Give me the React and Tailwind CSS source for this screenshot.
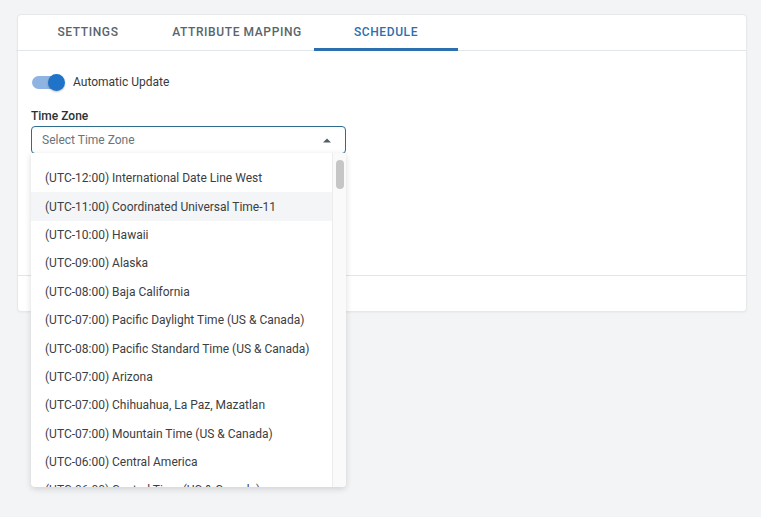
import { useState } from "react";

const zones = [
    "(UTC-12:00) International Date Line West",
    "(UTC-11:00) Coordinated Universal Time-11",
    "(UTC-10:00) Hawaii",
    "(UTC-09:00) Alaska",
    "(UTC-08:00) Baja California",
    "(UTC-07:00) Pacific Daylight Time (US & Canada)",
    "(UTC-08:00) Pacific Standard Time (US & Canada)",
    "(UTC-07:00) Arizona",
    "(UTC-07:00) Chihuahua, La Paz, Mazatlan",
    "(UTC-07:00) Mountain Time (US & Canada)",
    "(UTC-06:00) Central America",
    "(UTC-06:00) Central Time (US & Canada)",
    "(UTC-06:00) Guadalajara, Mexico City, Monterrey",
];

const tabs = ["Settings", "Attribute Mapping", "Schedule"];

export default function App() {
    const [active, setActive] = useState(2);
    const [auto, setAuto] = useState(true);

    return (
        <div className="h-[517px] bg-[#f2f4f5] pt-[14px] px-[17px] font-['Roboto',sans-serif] overflow-hidden">
            {/* Card */}
            <div className="relative w-[730px] bg-white rounded-[4px] border border-[#e6e9ea] shadow-[0_1px_2px_rgba(0,0,0,0.04)]">
                {/* Tabs */}
                <div className="flex gap-[5px] h-[36px] border-b border-[#e3e6e8] -ml-[2px]">
                    {tabs.map((t, i) => (
                        <button
                            key={t}
                            onClick={() => setActive(i)}
                            className={`w-[144px] h-[36px] pt-[1px] text-[12px] font-medium uppercase tracking-[0.6px] border-b-[3px] ${
                                active === i
                                    ? "text-[#2c6fae] border-[#2c6fae]"
                                    : "text-[#59656a] border-transparent"
                            }`}
                        >
                            {t}
                        </button>
                    ))}
                </div>

                {/* Body */}
                <div className="h-[224px] px-[13px] pt-[22px]">
                    <div className="flex items-center">
                        <button
                            onClick={() => setAuto(!auto)}
                            className="relative w-[34px] h-[18px] flex items-center"
                        >
                            <span className="w-[28px] h-[13px] rounded-full bg-[#8fb4e2] ml-[1px]"></span>
                            <span className="absolute right-0 top-[1px] w-[17px] h-[17px] rounded-full bg-[#1f73c9] shadow-[0_1px_2px_rgba(0,0,0,0.25)]"></span>
                        </button>
                        <span className="ml-[8px] text-[12px] text-[#333b3e]">Automatic Update</span>
                    </div>

                    <div className="mt-[16px] text-[12px] font-medium text-[#2b3133]">Time Zone</div>

                    <div className="mt-[1px] w-[315px] h-[28px] border border-[#2e6d8e] rounded-[4px] flex items-center justify-between pl-[10px] pr-[13px]">
                        <span className="text-[12px] text-[#6b7478]">Select Time Zone</span>
                        <svg width="10" height="6" viewBox="0 0 10 6">
                            <path d="M1 5.5 L5 1.5 L9 5.5 Z" fill="#555d60" />
                        </svg>
                    </div>
                </div>

                {/* Footer */}
                <div className="h-[36px] border-t border-[#e3e6e8]"></div>

                {/* Dropdown */}
                <div className="absolute left-[13px] top-[138px] w-[315px] h-[334px] bg-white rounded-b-[4px] shadow-[0_2px_6px_rgba(0,0,0,0.15)] flex overflow-hidden">
                    <div className="flex-1 pt-[11px]">
                        {zones.map((z, i) => (
                            <div
                                key={z}
                                className={`h-[28.4px] flex items-center pl-[14px] text-[12px] text-[#3a4043] whitespace-nowrap ${
                                    i === 1 ? "bg-[#f4f5f6]" : ""
                                }`}
                            >
                                {z}
                            </div>
                        ))}
                    </div>
                    <div className="w-[14px] bg-[#fafafa] border-l border-[#ececec] pt-[7px] flex justify-center">
                        <div className="w-[8px] h-[29px] rounded-full bg-[#c6c6c6]"></div>
                    </div>
                </div>
            </div>
        </div>
    );
}
